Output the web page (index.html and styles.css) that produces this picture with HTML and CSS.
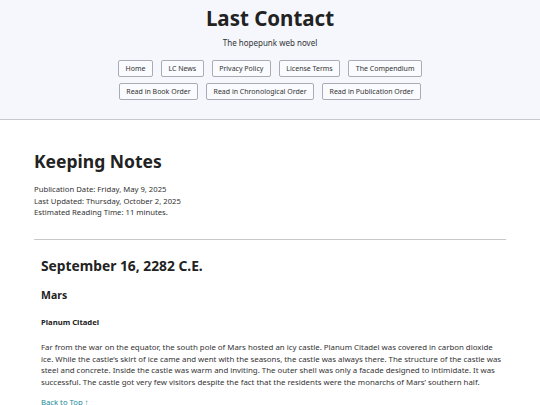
FILE: index.html
```html
<!DOCTYPE html>
<html lang="en">
<head>
<meta charset="utf-8">
<title>Keeping Notes - Last Contact</title>
<link rel="stylesheet" href="styles.css">
</head>
<body>
<header class="site-header">
  <h1 class="site-title">Last Contact</h1>
  <p class="site-tagline">The hopepunk web novel</p>
  <nav class="site-nav">
    <div class="nav-row">
      <a class="nav-btn" href="#">Home</a>
      <a class="nav-btn" href="#">LC News</a>
      <a class="nav-btn" href="#">Privacy Policy</a>
      <a class="nav-btn" href="#">License Terms</a>
      <a class="nav-btn" href="#">The Compendium</a>
    </div>
    <div class="nav-row">
      <a class="nav-btn" href="#">Read in Book Order</a>
      <a class="nav-btn" href="#">Read in Chronological Order</a>
      <a class="nav-btn" href="#">Read in Publication Order</a>
    </div>
  </nav>
</header>
<main class="content">
  <h1 class="page-title">Keeping Notes</h1>
  <div class="meta">
    <p>Publication Date: Friday, May 9, 2025</p>
    <p>Last Updated: Thursday, October 2, 2025</p>
    <p>Estimated Reading Time: 11 minutes.</p>
  </div>
  <hr class="divider">
  <article class="story">
    <h2 class="date-head">September 16, 2282 C.E.</h2>
    <h3 class="place-head">Mars</h3>
    <h4 class="sub-head">Planum Citadel</h4>
    <p class="para">Far from the war on the equator, the south pole of Mars hosted an icy castle. Planum Citadel was covered in carbon dioxide ice. While the castle’s skirt of ice came and went with the seasons, the castle was always there. The structure of the castle was steel and concrete. Inside the castle was warm and inviting. The outer shell was only a facade designed to intimidate. It was successful. The castle got very few visitors despite the fact that the residents were the monarchs of Mars’ southern half.</p>
    <a class="top-link" href="#">Back to Top ↑</a>
  </article>
</main>
</body>
</html>
```
FILE: styles.css
```css
* { box-sizing: border-box; }
html, body { margin: 0; padding: 0; }
body {
  font-family: "Noto Sans", "Open Sans", sans-serif;
  color: #222;
  background: #fff;
}
.site-header {
  background: #f5f7fd;
  border-bottom: 1px solid #c8c8cc;
  height: 120px;
  padding-top: 4px;
  text-align: center;
}
.site-title {
  margin: 0;
  font-size: 20.5px;
  line-height: 28px;
  font-weight: 700;
  color: #222;
}
.site-tagline {
  margin: 5px 0 0;
  font-size: 8px;
  line-height: 12px;
  color: #333;
}
.site-nav {
  margin-top: 11px;
  display: flex;
  flex-direction: column;
  align-items: center;
  gap: 6px;
}
.nav-row {
  display: flex;
  gap: 8px;
}
.nav-btn {
  display: block;
  font-size: 7px;
  line-height: 15px;
  padding: 0 6.5px;
  border: 1px solid #a9acb5;
  border-radius: 2px;
  background: #fafbfe;
  color: #333;
  text-decoration: none;
}
.content {
  padding: 0 34px;
}
.page-title {
  margin: 29px 0 0;
  font-size: 17.5px;
  line-height: 24px;
  font-weight: 700;
  color: #222;
}
.meta {
  margin-top: 11px;
  font-size: 7.7px;
  line-height: 11.7px;
  color: #333;
}
.meta p { margin: 0; }
.divider {
  margin: 20px 0 0;
  border: 0;
  border-top: 1px solid #c8c8c8;
}
.story {
  padding: 0 0 0 7px;
}
.date-head {
  margin: 16px 0 0;
  font-size: 13.8px;
  line-height: 20px;
  font-weight: 700;
  color: #222;
}
.place-head {
  margin: 11px 0 0;
  font-size: 10.5px;
  line-height: 16px;
  font-weight: 700;
}
.sub-head {
  margin: 13px 0 0;
  font-size: 7.7px;
  line-height: 12px;
  font-weight: 700;
}
.para {
  margin: 14px 0 0;
  font-size: 7.85px;
  line-height: 11.5px;
  color: #333;
}
.top-link {
  display: inline-block;
  margin-top: 8px;
  font-size: 7.7px;
  line-height: 12px;
  color: #1a8a9a;
  text-decoration: none;
}
```
